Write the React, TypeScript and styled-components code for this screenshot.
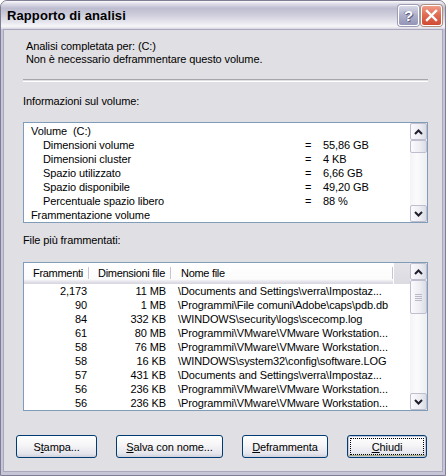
import React from "react";
import styled, { createGlobalStyle } from "styled-components";

const GlobalStyle = createGlobalStyle`
  html, body {
    margin: 0;
    padding: 0;
    background: #ffffff;
  }
  body {
    font-family: Tahoma, "Liberation Sans", Arial, sans-serif;
    font-size: 11px;
    letter-spacing: -0.1px;
    color: #000;
  }
`;

const Window = styled.div`
  width: 446px;
  height: 476px;
  box-sizing: border-box;
  display: flex;
  flex-direction: column;
  background: #c6c5d7;
  border: 1px solid #7f7e95;
  border-radius: 7px 7px 0 0;
  overflow: hidden;
`;

const TitleBar = styled.div`
  height: 28px;
  flex: none;
  display: flex;
  align-items: center;
  padding: 0 3px 0 6px;
  background: linear-gradient(
    to bottom,
    #fbfbfd 0%,
    #dedde8 10%,
    #bebdd0 26%,
    #cfcedc 50%,
    #e8e8ef 78%,
    #f7f7f9 90%,
    #d7d6e2 100%
  );
`;

const Title = styled.div`
  flex: 1;
  font-family: "Trebuchet MS", "Liberation Sans", Arial, sans-serif;
  font-weight: bold;
  font-size: 13px;
  color: #000;
  letter-spacing: 0.1px;
`;

const CaptionButtons = styled.div`
  display: flex;
  gap: 2px;
`;

const CaptionButton = styled.div<{ $kind: "help" | "close" }>`
  width: 21px;
  height: 21px;
  box-sizing: border-box;
  border: 1px solid #ffffff;
  border-radius: 3px;
  display: flex;
  align-items: center;
  justify-content: center;
  background: ${(p) =>
    p.$kind === "close"
      ? "linear-gradient(to bottom, #ef9d8a 0%, #e26c55 45%, #cf4a33 100%)"
      : "linear-gradient(to bottom, #d6d7e6 0%, #aeb0ca 50%, #9395b6 100%)"};
  box-shadow: 0 0 0 1px ${(p) => (p.$kind === "close" ? "#b0907f" : "#9d9db5")};
`;

const HelpGlyph = styled.span`
  font-family: "Liberation Sans", Arial, sans-serif;
  font-weight: bold;
  font-size: 15px;
  line-height: 1;
  color: #fff;
  text-shadow: 1px 1px 0 #5d5f80, -1px 0 0 #7a7c9c;
`;

const Body = styled.div`
  flex: 1;
  margin: 0 2px 3px 2px;
  border: 1px solid #a9a8bd;
  background: #e0dfe3;
  padding: 10px 14px 0 19px;
  display: flex;
  flex-direction: column;
`;

const Intro = styled.div`
  padding-left: 3px;
  line-height: 13px;
`;

const Separator = styled.div`
  margin-top: 13px;
  height: 1px;
  border-top: 1px solid #a7a6aa;
  border-bottom: 1px solid #ffffff;
`;

const Label = styled.div<{ $top: number }>`
  margin-top: ${(p) => p.$top}px;
  line-height: 13px;
`;

const Box = styled.div<{ $height: number; $top: number }>`
  margin-top: ${(p) => p.$top}px;
  height: ${(p) => p.$height}px;
  box-sizing: border-box;
  border: 1px solid #7f9db9;
  background: #ffffff;
  display: flex;
  overflow: hidden;
`;

const BoxMain = styled.div`
  flex: 1;
  min-width: 0;
  display: flex;
  flex-direction: column;
  overflow: hidden;
`;

const VolumeList = styled.div`
  padding: 1px 0 0 7px;
`;

const VolumeRow = styled.div<{ $indent?: boolean }>`
  display: grid;
  grid-template-columns: 274px 18px 1fr;
  height: 14px;
  line-height: 14px;
  white-space: nowrap;
  & > span:first-child {
    padding-left: ${(p) => (p.$indent ? 12 : 0)}px;
  }
`;

/* scrollbar */

const ScrollBar = styled.div`
  width: 17px;
  flex: none;
  display: flex;
  flex-direction: column;
  background: linear-gradient(to right, #f3f3f6 0%, #fbfbfc 40%, #eeeef2 100%);
`;

const ScrollPart = styled.div<{ $h: number }>`
  height: ${(p) => p.$h}px;
  flex: none;
  box-sizing: border-box;
  border: 1px solid #bebecf;
  border-radius: 2px;
  background: linear-gradient(to right, #fbfbfd 0%, #eeeef3 55%, #dcdce6 100%);
  display: flex;
  align-items: center;
  justify-content: center;
`;

const Track = styled.div`
  flex: 1;
`;

const Arrow = ({ dir }: { dir: "up" | "down" }) => (
  <svg width="9" height="6" viewBox="0 0 9 6">
    <polyline
      points={dir === "up" ? "1,5 4.5,1.5 8,5" : "1,1 4.5,4.5 8,1"}
      fill="none"
      stroke="#1e1e2c"
      strokeWidth="2"
    />
  </svg>
);

const Grip = () => (
  <svg width="7" height="7" viewBox="0 0 7 7">
    <g stroke="#b9b9c8" strokeWidth="1">
      <line x1="0" y1="0.5" x2="7" y2="0.5" />
      <line x1="0" y1="2.5" x2="7" y2="2.5" />
      <line x1="0" y1="4.5" x2="7" y2="4.5" />
      <line x1="0" y1="6.5" x2="7" y2="6.5" />
    </g>
  </svg>
);

function Scroller({ thumb, grip }: { thumb: number; grip?: boolean }) {
  return (
    <ScrollBar>
      <ScrollPart $h={17}>
        <Arrow dir="up" />
      </ScrollPart>
      <ScrollPart $h={thumb}>{grip && <Grip />}</ScrollPart>
      <Track />
      <ScrollPart $h={17}>
        <Arrow dir="down" />
      </ScrollPart>
    </ScrollBar>
  );
}

/* list view */

const HeaderRow = styled.div`
  height: 21px;
  flex: none;
  display: flex;
  background: linear-gradient(
    to bottom,
    #ffffff 0%,
    #fbfbfb 78%,
    #e9e8ee 86%,
    #d6d5df 100%
  );
`;

const HeaderCell = styled.div<{ $w: number; $pad: number }>`
  position: relative;
  width: ${(p) => p.$w}px;
  flex: none;
  box-sizing: border-box;
  padding-left: ${(p) => p.$pad}px;
  line-height: 20px;
  white-space: nowrap;
  letter-spacing: -0.3px;
  &::after {
    content: "";
    position: absolute;
    right: 0;
    top: 4px;
    bottom: 5px;
    width: 1px;
    background: #c7c5d2;
    box-shadow: 1px 0 0 #ffffff;
  }
`;

const HeaderFiller = styled.div`
  flex: 1;
  border-left: 1px solid #ffffff;
  background: linear-gradient(to bottom, #e4e3e8 0%, #dcdbe2 100%);
`;

const DataRow = styled.div`
  display: flex;
  height: 14px;
  line-height: 14px;
  white-space: nowrap;
`;

const Cell = styled.div<{ $w?: number; $align?: string; $pl?: number; $pr?: number }>`
  width: ${(p) => (p.$w ? `${p.$w}px` : "auto")};
  flex: ${(p) => (p.$w ? "none" : "1")};
  box-sizing: border-box;
  text-align: ${(p) => p.$align || "left"};
  padding-left: ${(p) => p.$pl || 0}px;
  padding-right: ${(p) => p.$pr || 0}px;
  overflow: hidden;
`;

/* buttons */

const ButtonRow = styled.div`
  margin: 24px 0 0 -7px;
  display: flex;
  gap: 19px;
`;

const Button = styled.div<{ $w: number; $default?: boolean }>`
  width: ${(p) => p.$w}px;
  height: 23px;
  box-sizing: border-box;
  border: 1px solid #003c74;
  border-radius: 3px;
  display: flex;
  align-items: center;
  justify-content: center;
  background: linear-gradient(to bottom, #ffffff 0%, #f5f5f7 45%, #e4e4ec 85%, #cfcfdc 100%);
  box-shadow: ${(p) =>
    p.$default ? "inset 0 0 0 1px #c7cadb, inset 0 -1px 0 1px #a9ad86" : "none"};
  position: relative;
  & u {
    text-decoration: underline;
  }
  ${(p) =>
    p.$default &&
    `&::after {
      content: "";
      position: absolute;
      inset: 2px;
      border: 1px dotted #000;
    }`}
`;

const volume: [string, string][] = [
  ["Dimensioni volume", "55,86 GB"],
  ["Dimensioni cluster", "4 KB"],
  ["Spazio utilizzato", "6,66 GB"],
  ["Spazio disponibile", "49,20 GB"],
  ["Percentuale spazio libero", "88 %"],
];

const files: [string, string, string][] = [
  ["2,173", "11 MB", "\\Documents and Settings\\verra\\Impostaz..."],
  ["90", "1 MB", "\\Programmi\\File comuni\\Adobe\\caps\\pdb.db"],
  ["84", "332 KB", "\\WINDOWS\\security\\logs\\scecomp.log"],
  ["61", "80 MB", "\\Programmi\\VMware\\VMware Workstation..."],
  ["58", "76 MB", "\\Programmi\\VMware\\VMware Workstation..."],
  ["58", "16 KB", "\\WINDOWS\\system32\\config\\software.LOG"],
  ["57", "431 KB", "\\Documents and Settings\\verra\\Impostaz..."],
  ["56", "236 KB", "\\Programmi\\VMware\\VMware Workstation..."],
  ["56", "236 KB", "\\Programmi\\VMware\\VMware Workstation..."],
];

export default function App() {
  return (
    <>
      <GlobalStyle />
      <Window>
        <TitleBar>
          <Title>Rapporto di analisi</Title>
          <CaptionButtons>
            <CaptionButton $kind="help">
              <HelpGlyph>?</HelpGlyph>
            </CaptionButton>
            <CaptionButton $kind="close">
              <svg width="13" height="13" viewBox="0 0 13 13">
                <path
                  d="M2 2 L11 11 M11 2 L2 11"
                  stroke="#ffffff"
                  strokeWidth="2.4"
                  strokeLinecap="square"
                />
              </svg>
            </CaptionButton>
          </CaptionButtons>
        </TitleBar>
        <Body>
          <Intro>
            <div>Analisi completata per: (C:)</div>
            <div>Non è necessario deframmentare questo volume.</div>
          </Intro>
          <Separator />
          <Label $top={13}>Informazioni sul volume:</Label>
          <Box $top={14} $height={101}>
            <BoxMain>
              <VolumeList>
                <VolumeRow>
                  <span>Volume&nbsp;&nbsp;(C:)</span>
                  <span />
                  <span />
                </VolumeRow>
                {volume.map(([k, v]) => (
                  <VolumeRow key={k} $indent>
                    <span>{k}</span>
                    <span>=</span>
                    <span>{v}</span>
                  </VolumeRow>
                ))}
                <VolumeRow>
                  <span>Frammentazione volume</span>
                  <span />
                  <span />
                </VolumeRow>
              </VolumeList>
            </BoxMain>
            <Scroller thumb={13} />
          </Box>
          <Label $top={11}>File più frammentati:</Label>
          <Box $top={15} $height={149}>
            <BoxMain>
              <HeaderRow>
                <HeaderCell $w={65} $pad={9}>Frammenti</HeaderCell>
                <HeaderCell $w={82} $pad={9}>Dimensioni file</HeaderCell>
                <HeaderCell $w={222} $pad={10}>Nome file</HeaderCell>
                <HeaderFiller />
              </HeaderRow>
              {files.map(([n, size, name], i) => (
                <DataRow key={i}>
                  <Cell $w={65} $align="right" $pr={2}>{n}</Cell>
                  <Cell $w={82} $align="right" $pr={5}>{size}</Cell>
                  <Cell $pl={7}>{name}</Cell>
                </DataRow>
              ))}
            </BoxMain>
            <Scroller thumb={34} grip />
          </Box>
          <ButtonRow>
            <Button $w={81}>
              <span>S<u>t</u>ampa...</span>
            </Button>
            <Button $w={107}>
              <span><u>S</u>alva con nome...</span>
            </Button>
            <Button $w={86}>
              <span><u>D</u>eframmenta</span>
            </Button>
            <Button $w={80} $default>
              <span><u>C</u>hiudi</span>
            </Button>
          </ButtonRow>
        </Body>
      </Window>
    </>
  );
}
